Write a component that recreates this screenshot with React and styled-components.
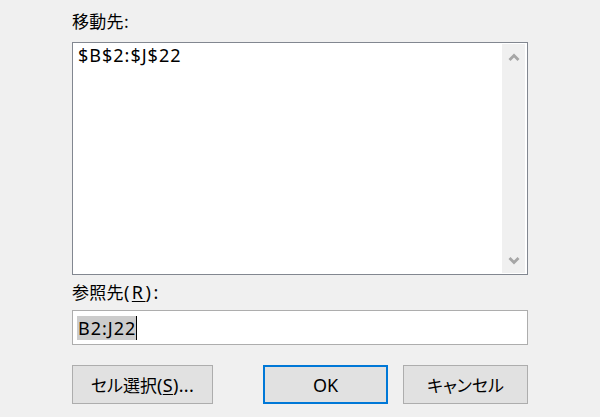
import React from 'react';
import styled, { createGlobalStyle } from 'styled-components';

const GlobalStyle = createGlobalStyle`
  html, body {
    margin: 0;
    padding: 0;
    background: #f0f0f0;
  }
  body {
    font-family: "Noto Sans CJK JP", "Noto Sans", sans-serif;
    color: #000;
  }
`;

const Dialog = styled.div`
  width: 600px;
  height: 417px;
  box-sizing: border-box;
  padding: 10px 72px 0 72px;
  display: flex;
  flex-direction: column;
  background: #f0f0f0;
`;

const Label = styled.div`
  font-size: 17px;
  line-height: 22px;
  height: 22px;
  letter-spacing: 0.3px;
  margin-top: ${(p) => p.$top || 0}px;
`;

// latin text is drawn wider than the CJK face's own latin glyphs
const Roman = styled.span`
  font-family: "Noto Sans", "Noto Sans CJK JP", sans-serif;
  font-size: ${(p) => p.$size || 18}px;
  letter-spacing: ${(p) => p.$spacing ?? 1}px;
`;

const Underline = styled.span`
  text-decoration: underline;
  text-underline-offset: 2px;
`;

const ListBox = styled.div`
  margin-top: 10px;
  height: 233px;
  box-sizing: border-box;
  border: 1px solid #828790;
  background: #fff;
  display: flex;
`;

const ListText = styled.div`
  flex: 1;
  padding: 1px 0 0 5px;
  line-height: 22px;
`;

const ScrollBar = styled.div`
  width: 23px;
  margin: 1px 2px 1px 0;
  background: #f0f0f0;
  display: flex;
  flex-direction: column;
  justify-content: space-between;
  align-items: center;
`;

const ArrowBox = styled.div`
  height: 26px;
  width: 23px;
  display: flex;
  align-items: center;
  justify-content: center;
`;

const InputBox = styled.div`
  margin-top: 7px;
  height: 35px;
  box-sizing: border-box;
  border: 1px solid #adadad;
  background: #fff;
  display: flex;
  align-items: center;
  padding-left: 4px;
`;

const Selected = styled.span`
  background: #cccccc;
  line-height: 24px;
  padding: 0 0 0 1px;
`;

const Caret = styled.span`
  display: inline-block;
  width: 1px;
  height: 24px;
  background: #000;
`;

const ButtonRow = styled.div`
  margin-top: 20px;
  display: flex;
  align-items: center;
`;

const Button = styled.button`
  width: ${(p) => p.$width}px;
  height: 39px;
  box-sizing: border-box;
  margin-left: ${(p) => p.$gap || 0}px;
  background: #e1e1e1;
  border: ${(p) => (p.$default ? '2px solid #0078d7' : '1px solid #adadad')};
  font-family: "Noto Sans CJK JP", "Noto Sans", sans-serif;
  font-size: 17px;
  font-feature-settings: "palt";
  color: #000;
  padding: 0;
  display: flex;
  align-items: center;
  justify-content: center;
  cursor: default;
`;

const Chevron = ({ down }) => (
  <svg width="12" height="9" viewBox="0 0 12 9">
    <polyline
      points={down ? '1.5,2 6,6.5 10.5,2' : '1.5,7 6,2.5 10.5,7'}
      fill="none"
      stroke="#a6a6a6"
      strokeWidth="2.8"
    />
  </svg>
);

const App = () => {
  return (
    <>
      <GlobalStyle />
      <Dialog>
        <Label>移動先:</Label>
        <ListBox>
          <ListText>
            <Roman>$B$2:$J$22</Roman>
          </ListText>
          <ScrollBar>
            <ArrowBox>
              <Chevron />
            </ArrowBox>
            <ArrowBox>
              <Chevron down />
            </ArrowBox>
          </ScrollBar>
        </ListBox>
        <Label $top={6}>
          参照先<Roman $spacing={2.5}>(<Underline>R</Underline>):</Roman>
        </Label>
        <InputBox>
          <Selected>
            <Roman>B2:J22</Roman>
          </Selected>
          <Caret />
        </InputBox>
        <ButtonRow>
          <Button $width={141}>
            セル選択<Roman $spacing={0.3}>(<Underline>S</Underline>)...</Roman>
          </Button>
          <Button $width={125} $gap={50} $default>
            <Roman $spacing={0}>OK</Roman>
          </Button>
          <Button $width={125} $gap={15}>
            キャンセル
          </Button>
        </ButtonRow>
      </Dialog>
    </>
  );
};

export default App;
